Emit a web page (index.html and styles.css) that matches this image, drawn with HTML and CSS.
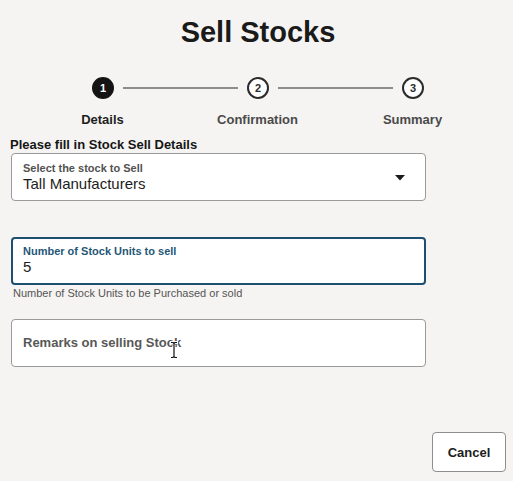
FILE: index.html
```html
<!DOCTYPE html>
<html lang="en">
<head>
<meta charset="utf-8">
<title>Sell Stocks</title>
<link rel="stylesheet" href="styles.css">
</head>
<body>
<main class="page">
  <h1 class="title">Sell Stocks</h1>

  <div class="stepper">
    <span class="step-dot step-dot-active">1</span>
    <span class="step-line"></span>
    <span class="step-dot">2</span>
    <span class="step-line"></span>
    <span class="step-dot">3</span>
  </div>
  <div class="step-labels">
    <span class="step-label step-label-active">Details</span>
    <span class="step-label">Confirmation</span>
    <span class="step-label">Summary</span>
  </div>

  <h2 class="section-title">Please fill in Stock Sell Details</h2>

  <div class="field field-select">
    <div class="field-body">
      <span class="field-label">Select the stock to Sell</span>
      <span class="field-value">Tall Manufacturers</span>
    </div>
    <svg class="caret" width="10" height="6" viewBox="0 0 10 6"><path d="M0 0 H10 L5 5.5 Z" fill="#1a1a1a"/></svg>
  </div>

  <div class="field field-focused">
    <div class="field-body">
      <span class="field-label field-label-focused">Number of Stock Units to sell</span>
      <span class="field-value">5</span>
    </div>
  </div>
  <p class="helper">Number of Stock Units to be Purchased or sold</p>

  <div class="field field-remarks">
    <span class="placeholder">Remarks on selling Stock</span>
    <svg class="ibeam" width="8" height="18" viewBox="0 0 8 18">
      <path d="M1 1.5 H3 L4 2.5 L5 1.5 H7 M4 2.5 V15.5 M1 16.5 H3 L4 15.5 L5 16.5 H7" fill="none" stroke="#fff" stroke-width="3" stroke-linecap="round"/>
      <path d="M1 1.5 H3 L4 2.5 L5 1.5 H7 M4 2.5 V15.5 M1 16.5 H3 L4 15.5 L5 16.5 H7" fill="none" stroke="#111" stroke-width="1.2"/>
    </svg>
  </div>

  <div class="footer">
    <button class="btn" type="button">Cancel</button>
  </div>
</main>
</body>
</html>
```

FILE: styles.css
```css
* { box-sizing: border-box; }

html, body {
  margin: 0;
  padding: 0;
  background: #f5f4f2;
}

body {
  font-family: "Liberation Sans", Arial, sans-serif;
  color: #1c1c1c;
  width: 513px;
  height: 481px;
  overflow: hidden;
}

.page {
  display: flex;
  flex-direction: column;
}

.title {
  margin: 15px 0 0 0;
  font-size: 29px;
  line-height: 34px;
  font-weight: 700;
  text-align: center;
  padding-left: 3px;
  color: #1a1a1a;
}

.stepper {
  display: flex;
  align-items: center;
  width: 332px;
  margin: 28px 0 0 92px;
}

.step-dot {
  width: 22px;
  height: 22px;
  flex: 0 0 22px;
  border-radius: 50%;
  border: 2px solid #2b2b2b;
  background: #fff;
  color: #2b2b2b;
  font-size: 11px;
  font-weight: 700;
  display: flex;
  align-items: center;
  justify-content: center;
  line-height: 1;
}

.step-dot-active {
  background: #141414;
  border-color: #141414;
  color: #fff;
}

.step-line {
  flex: 1;
  height: 2px;
  margin: 0 9px;
  background: #8c8c8c;
}

.step-labels {
  display: grid;
  grid-template-columns: 155px 155px 155px;
  margin: 13px 0 0 25px;
}

.step-label {
  text-align: center;
  font-size: 13px;
  line-height: 16px;
  font-weight: 700;
  color: #4a4a4a;
}

.step-label-active {
  color: #1e1e1e;
}

.section-title {
  margin: 9px 0 0 10px;
  font-size: 13px;
  line-height: 16px;
  font-weight: 700;
  color: #161616;
}

.field {
  width: 415px;
  height: 48px;
  margin-left: 11px;
  background: #fff;
  border: 1px solid #9a9a9a;
  border-radius: 4px;
  display: flex;
  align-items: center;
  padding: 0 11px;
}

.field-body {
  display: flex;
  flex-direction: column;
  align-self: flex-start;
  padding-top: 8px;
  flex: 1;
}

.field-label {
  font-size: 11px;
  line-height: 13px;
  font-weight: 700;
  color: #525252;
}

.field-label-focused {
  color: #1f5777;
}

.field-value {
  font-size: 15px;
  line-height: 18px;
  color: #1c1c1c;
}

.caret {
  margin-right: 9px;
  margin-top: 1px;
}

.field-focused {
  margin-top: 36px;
  border: 2px solid #1f4f70;
  padding: 0 10px;
}

.field-focused .field-body {
  padding-top: 6px;
}

.helper {
  margin: 2px 0 0 13px;
  font-size: 11px;
  line-height: 13px;
  color: #555;
}

.field-remarks {
  margin-top: 19px;
  position: relative;
}

.placeholder {
  font-size: 13px;
  line-height: 16px;
  font-weight: 700;
  color: #585858;
}

.ibeam {
  position: absolute;
  left: 158px;
  top: 21px;
}

.footer {
  display: flex;
  justify-content: flex-end;
  padding-right: 7px;
  margin-top: 65px;
}

.btn {
  width: 74px;
  height: 40px;
  border: 1px solid #8e8e8e;
  border-radius: 4px;
  background: #fff;
  font-family: "Liberation Sans", Arial, sans-serif;
  font-size: 13px;
  font-weight: 700;
  color: #1c1c1c;
  padding: 0;
}
```
